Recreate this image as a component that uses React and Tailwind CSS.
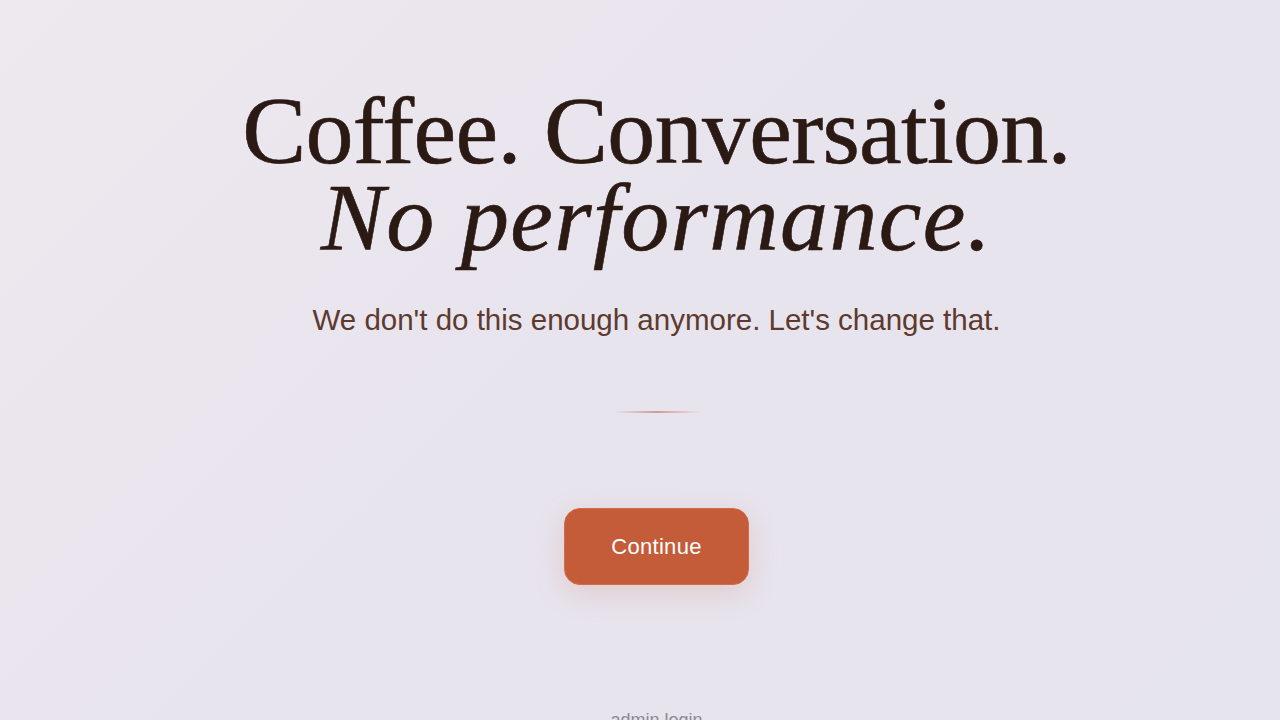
export default function App() {
  return (
    <div className="relative min-h-screen h-[720px] overflow-hidden bg-[linear-gradient(135deg,#eee9ee_0%,#e8e4ee_45%,#e6e4ec_100%)]">
      <div className="flex flex-col items-center pt-[87px] pl-[33px]">
        <h1
          className="text-center text-[#2b1914] text-[96px] leading-[87px] [-webkit-text-stroke:0.6px_#2b1914]"
          style={{ fontFamily: '"Liberation Serif", serif' }}
        >
          <span className="tracking-[-0.7px]">Coffee. Conversation.</span>
          <br />
          <em className="italic tracking-[1.4px]">No performance.</em>
        </h1>

        <p
          className="mt-[41px] text-[29.5px] leading-[36px] text-[#5e3a2e]"
          style={{ fontFamily: '"Liberation Sans", Arial, sans-serif' }}
        >
          We don't do this enough anymore. Let's change that.
        </p>

        <div className="mt-[73px] h-[2px] w-[88px] bg-[linear-gradient(90deg,transparent,#d49a94_50%,transparent)]" />

        <button
          className="mt-[95px] w-[185px] h-[77px] rounded-[16px] bg-[#c45c3a] text-white text-[22px] tracking-[0.3px] shadow-[0_8px_30px_rgba(196,92,58,0.18)] border border-[#d26b4a]"
          style={{ fontFamily: '"Liberation Sans", Arial, sans-serif' }}
        >
          Continue
        </button>

        <a
          className="mt-[122px] text-[18px] text-[#8d8a93]"
          style={{ fontFamily: '"Liberation Sans", Arial, sans-serif' }}
        >
          admin login
        </a>
      </div>
    </div>
  );
}
